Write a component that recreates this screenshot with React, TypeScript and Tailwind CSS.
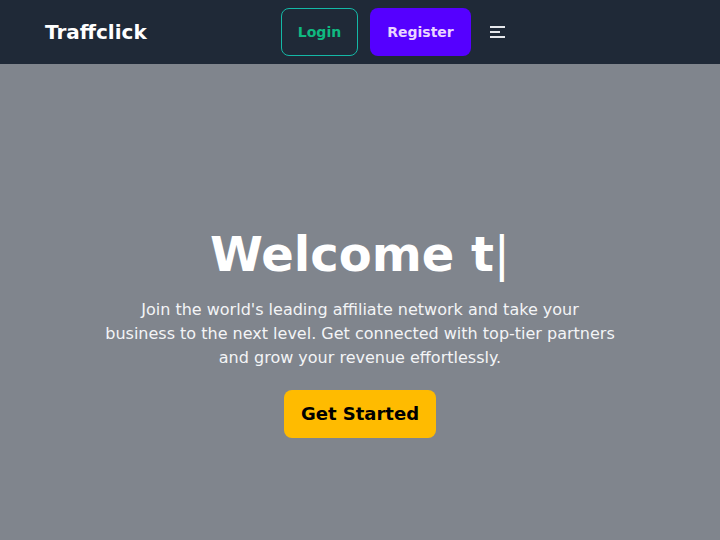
import React from "react";

export default function App() {
  return (
    <div className="min-h-screen bg-[#80858d]" style={{ fontFamily: '"DejaVu Sans", sans-serif' }}>
      <nav className="h-16 bg-[#1f2937] flex items-center px-[45px]">
        <div className="text-xl font-bold text-white w-[102px]">Traffclick</div>
        <div className="ml-[134px] flex items-center">
          <button className="h-12 w-[77px] rounded-lg border border-[#14b8a6] text-[#10b981] text-sm font-bold flex items-center justify-center">
            Login
          </button>
          <button className="ml-3 h-12 w-[101px] rounded-lg bg-[#5500ff] text-[#e9d5ff] text-sm font-bold flex items-center justify-center">
            Register
          </button>
          <div className="ml-[19px] flex flex-col gap-[3px]">
            <span className="block w-[15px] h-[2px] bg-[#e5e7eb]" />
            <span className="block w-[10px] h-[2px] bg-[#e5e7eb]" />
            <span className="block w-[15px] h-[2px] bg-[#e5e7eb]" />
          </div>
        </div>
      </nav>
      <section className="h-[476px] flex flex-col items-center text-center pt-[166px]">
        <h1 className="text-5xl font-bold text-white leading-none">
          Welcome t<span className="font-normal">|</span>
        </h1>
        <p className="mt-[20px] max-w-lg text-base leading-6 text-[#f3f4f6]">
          Join the world's leading affiliate network and take your business to the next level. Get connected with top-tier partners and grow your revenue effortlessly.
        </p>
        <button className="mt-[20px] h-12 px-[17px] rounded-lg bg-[#ffbb00] text-black text-lg font-bold">
          Get Started
        </button>
      </section>
    </div>
  );
}
